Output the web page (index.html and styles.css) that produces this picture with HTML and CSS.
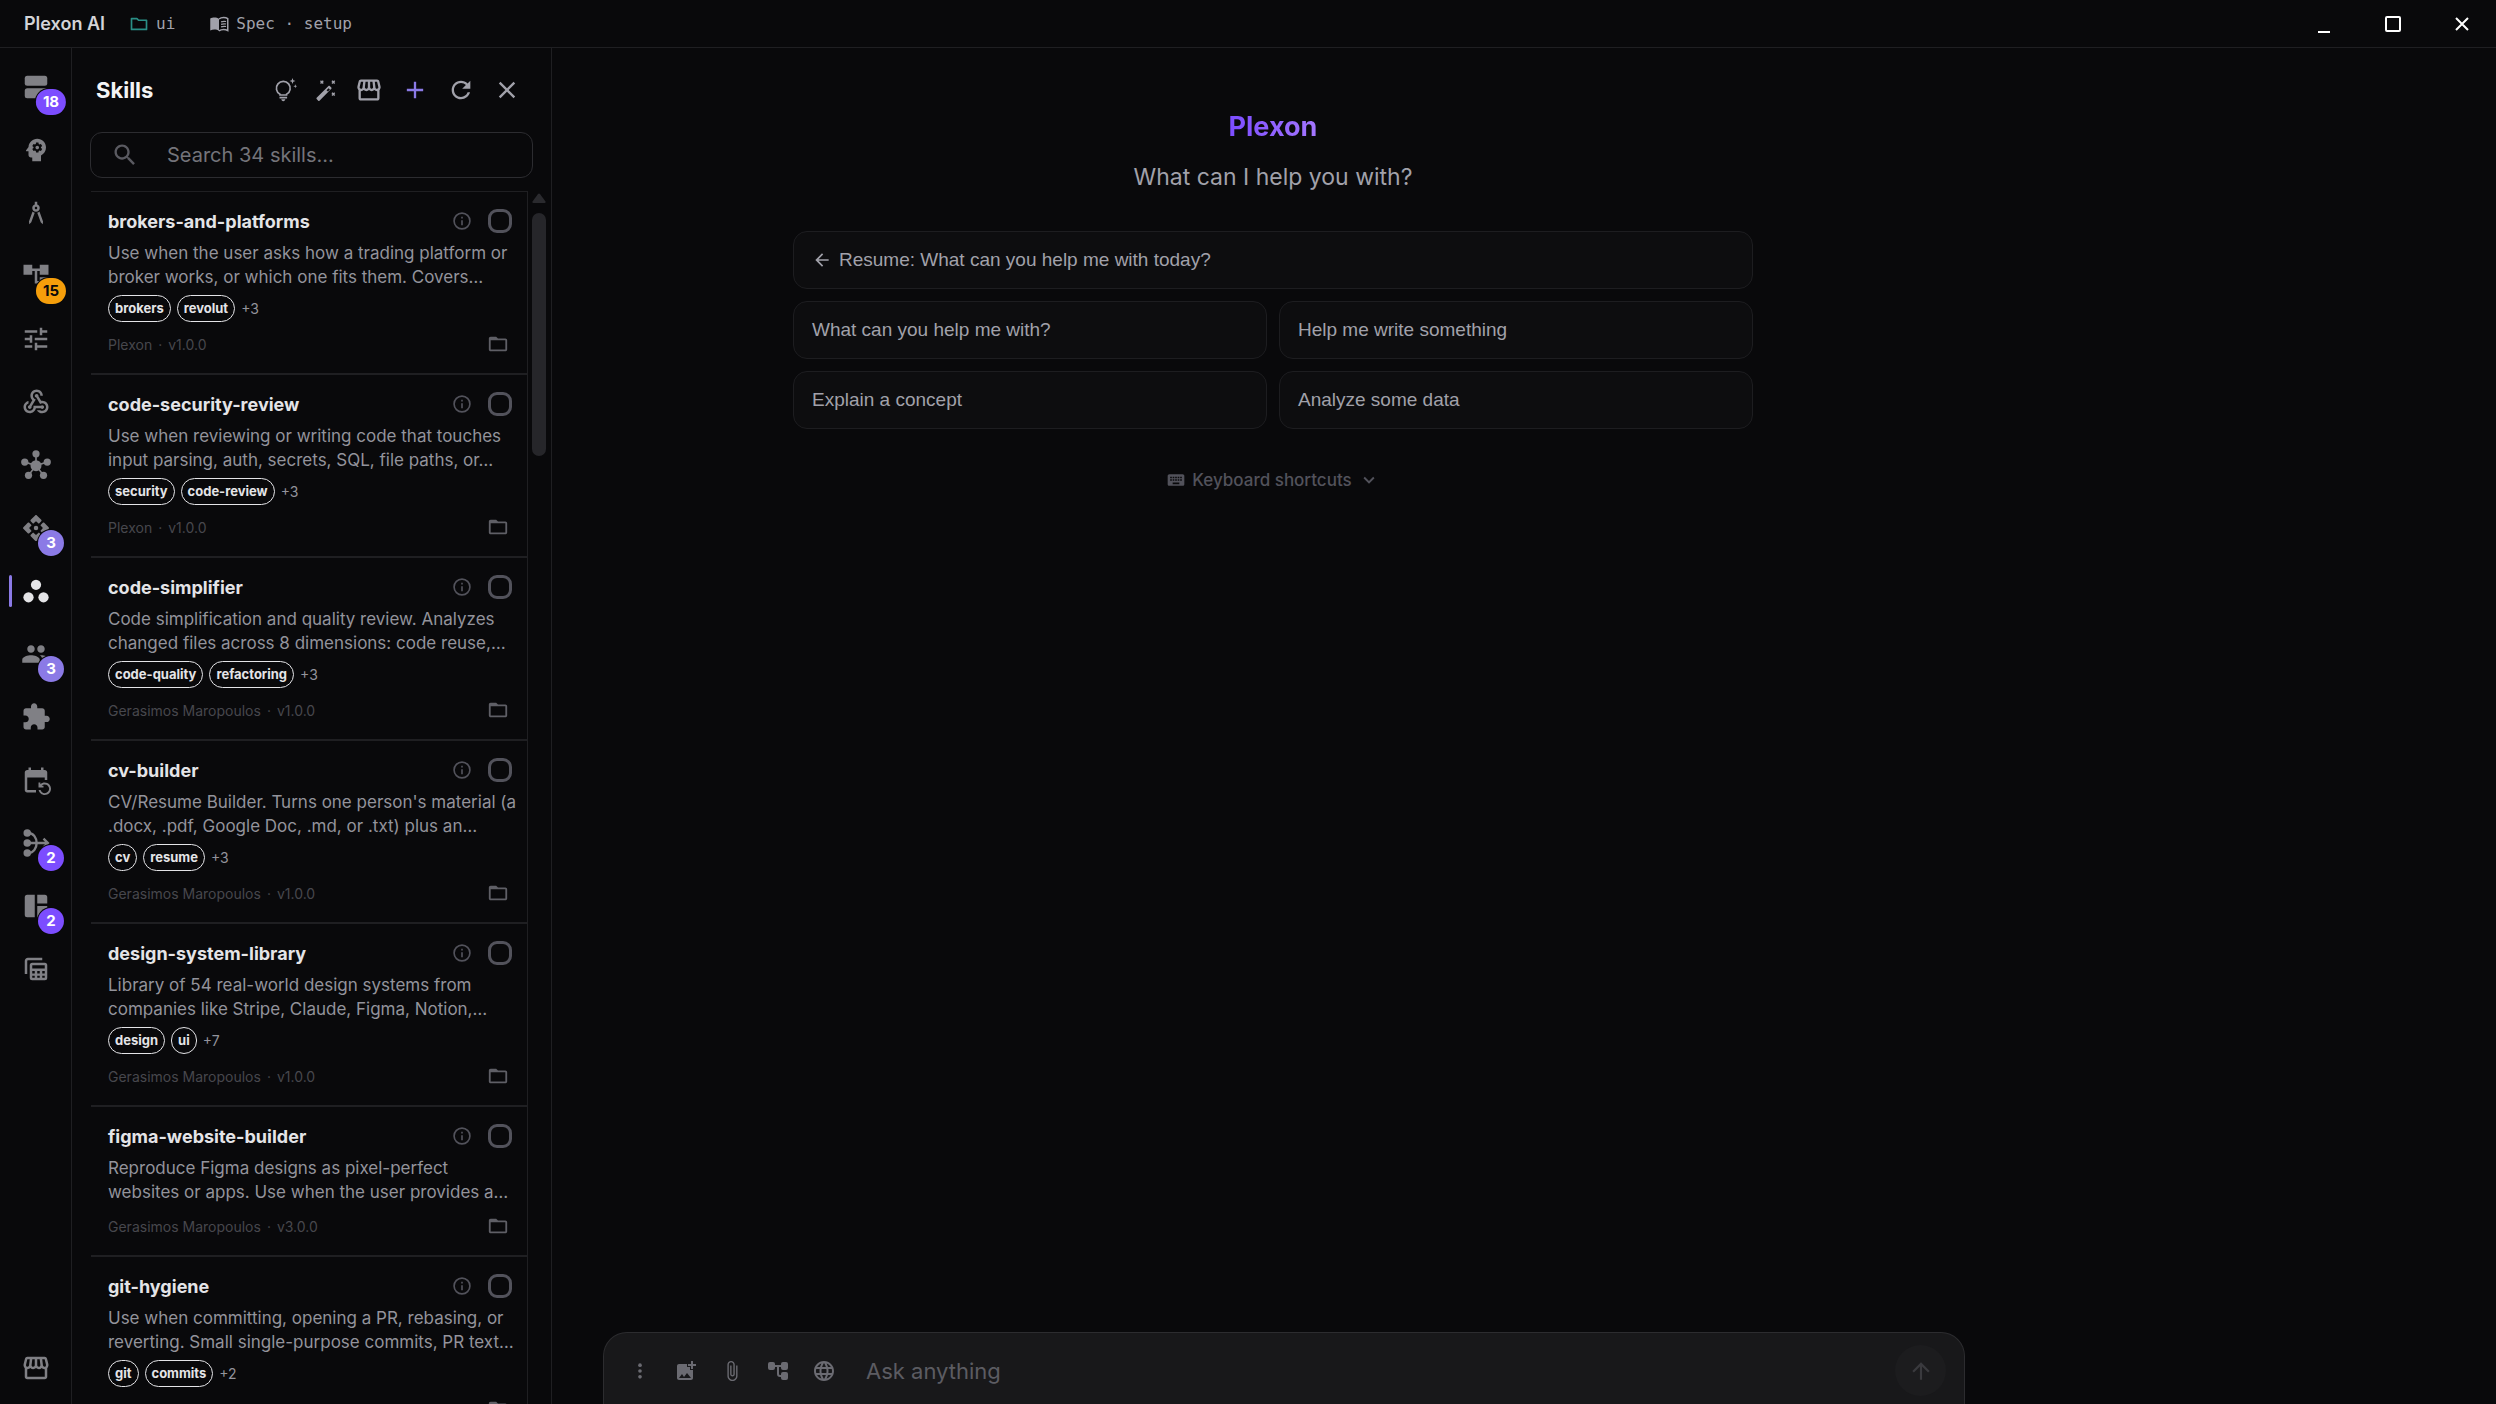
FILE: index.html
```html
<!DOCTYPE html>
<html lang="en">
<head>
<meta charset="utf-8">
<title>Plexon AI</title>
<link rel="stylesheet" href="styles.css">
</head>
<body>
<svg class="sprite" aria-hidden="true">
  <symbol id="agenda" viewBox="0 0 24 24"><rect x="3" y="3" width="18" height="8" rx="2"/><rect x="3" y="13" width="18" height="8" rx="2"/></symbol>
  <symbol id="mind" viewBox="0 0 24 24"><path d="M13 8.57c-.79 0-1.43.64-1.43 1.43s.64 1.43 1.43 1.43 1.43-.64 1.43-1.43-.64-1.43-1.43-1.43z"/><path d="M13 3C9.25 3 6.2 5.94 6.02 9.64L4.1 12.2c-.25.33-.01.8.4.8H6v3c0 1.1.9 2 2 2h1v3h7v-4.68c2.36-1.12 4-3.53 4-6.32 0-3.87-3.13-7-7-7zm3 7c0 .13-.01.26-.02.39l.83.66c.08.06.1.16.05.25l-.8 1.39c-.05.09-.16.12-.24.09l-.99-.4c-.21.16-.43.29-.67.39L14 13.83c-.01.1-.1.17-.2.17h-1.6c-.1 0-.18-.07-.2-.17l-.15-1.06c-.25-.1-.47-.23-.68-.39l-.99.4c-.09.03-.2 0-.25-.09l-.8-1.39c-.05-.08-.03-.19.05-.25l.84-.66c-.01-.13-.02-.26-.02-.39s.02-.27.04-.39l-.85-.66c-.08-.06-.1-.16-.05-.26l.8-1.38c.05-.09.15-.12.24-.09l1 .4c.2-.15.43-.29.67-.39l.15-1.06C12.02 6.07 12.1 6 12.2 6h1.6c.1 0 .18.07.2.17l.15 1.06c.24.1.46.23.67.39l1-.4c.09-.03.2 0 .24.09l.8 1.38c.05.09.03.2-.05.26l-.85.66c.03.12.04.25.04.39z"/></symbol>
  <symbol id="compass" viewBox="0 0 24 24"><path d="M6.36 18.78L6.61 21l1.62-1.54 2.77-7.6c-.68-.17-1.28-.51-1.77-.98l-2.87 7.9zM14.77 10.88c-.49.47-1.1.81-1.77.98l2.77 7.6L17.39 21l.25-2.22-2.87-7.9zM15 8c0-1.3-.84-2.4-2-2.82V3h-2v2.18C9.84 5.6 9 6.7 9 8c0 1.66 1.34 3 3 3s3-1.34 3-3zm-3 1c-.55 0-1-.45-1-1s.45-1 1-1 1 .45 1 1-.45 1-1 1z"/></symbol>
  <symbol id="tree" viewBox="0 0 24 24"><path d="M22 11V3h-7v3H9V3H2v8h7V8h2v10h4v3h7v-8h-7v3h-2V8h2v3z"/></symbol>
  <symbol id="tree-round" viewBox="0 0 24 24"><path d="M17 3h3a2 2 0 0 1 2 2v4a2 2 0 0 1-2 2h-3a2 2 0 0 1-2-2V8h-2v7a1 1 0 0 0 1 1h1v-1a2 2 0 0 1 2-2h3a2 2 0 0 1 2 2v4a2 2 0 0 1-2 2h-3a2 2 0 0 1-2-2v-1h-1a3 3 0 0 1-3-3V8H9v1a2 2 0 0 1-2 2H4a2 2 0 0 1-2-2V5a2 2 0 0 1 2-2h3a2 2 0 0 1 2 2v1h6V5a2 2 0 0 1 2-2z"/></symbol>
  <symbol id="tune" viewBox="0 0 24 24"><path d="M3 17v2h6v-2H3zM3 5v2h10V5H3zm10 16v-2h8v-2h-8v-2h-2v6h2zM7 9v2H3v2h4v2h2V9H7zm14 4v-2H11v2h10zm-6-4h2V7h4V5h-4V3h-2v6z"/></symbol>
  <symbol id="webhook" viewBox="0 0 24 24"><path d="M10 15h5.88c.27-.31.67-.5 1.12-.5.83 0 1.5.67 1.5 1.5s-.67 1.5-1.5 1.5c-.44 0-.84-.19-1.12-.5H11.9c-.46 2.28-2.48 4-4.9 4-2.76 0-5-2.24-5-5 0-2.42 1.72-4.44 4-4.9v2.07C4.84 13.58 4 14.7 4 16c0 1.65 1.35 3 3 3s3-1.35 3-3v-1zm2.5-11c1.65 0 3 1.35 3 3h2c0-2.76-2.24-5-5-5s-5 2.24-5 5c0 1.43.6 2.71 1.55 3.62l-2.35 3.9c-.68.14-1.2.75-1.2 1.48 0 .83.67 1.5 1.5 1.5s1.5-.67 1.5-1.5c0-.16-.02-.31-.07-.45l3.38-5.63C10.49 9.61 9.5 8.42 9.5 7c0-1.65 1.35-3 3-3zm4.5 9c-.64 0-1.23.2-1.72.54l-3.05-5.07C11.53 8.35 11 7.74 11 7c0-.83.67-1.5 1.5-1.5S14 6.17 14 7c0 .15-.02.29-.06.43l2.19 3.65c.28-.05.57-.08.87-.08 2.76 0 5 2.24 5 5s-2.24 5-5 5c-1.85 0-3.47-1.01-4.33-2.5h2.67c.48.32 1.05.5 1.66.5 1.65 0 3-1.35 3-3s-1.35-3-3-3z"/></symbol>
  <symbol id="hub" viewBox="0 0 24 24"><circle cx="12" cy="12.5" r="4.4"/><circle cx="12" cy="3" r="2.9"/><circle cx="3" cy="9.6" r="2.9"/><circle cx="21" cy="9.6" r="2.9"/><circle cx="6" cy="20.2" r="2.9"/><circle cx="18" cy="20.2" r="2.9"/><path d="M12 12.5V3M12 12.5L3 9.6M12 12.5l9-2.9M12 12.5l-6 7.7M12 12.5l6 7.7" fill="none" stroke="currentColor" stroke-width="1.3"/></symbol>
  <symbol id="api" viewBox="0 0 24 24"><circle cx="12" cy="12" r="1.8"/><path d="M12 6.500l2.300 2 1.900-1.900c.4-.4.4-.8 0-1.200L12.700 1.900c-.4-.4-1-.4-1.400 0L7.800 5.400c-.4.4-.4.800 0 1.200l1.900 1.900zM6.500 12l2-2.300-1.900-1.900c-.4-.4-.8-.4-1.200 0l-3.500 3.500c-.4.4-.4 1 0 1.400l3.500 3.500c.4.4.8.4 1.200 0l1.900-1.900zM17.500 12l-2-2.300 1.900-1.900c.4-.4.8-.4 1.200 0l3.500 3.500c.4.4.4 1 0 1.400l-3.500 3.500c-.4.4-.8.4-1.200 0l-1.900-1.900zM12 17.500l2.300-2 1.900 1.900c.4.4.4.8 0 1.200l-3.500 3.500c-.4.4-1 .4-1.400 0l-3.500-3.500c-.4-.4-.4-.8 0-1.200l1.900-1.900z"/></symbol>
  <symbol id="workspaces" viewBox="0 0 24 24"><circle cx="12" cy="7" r="4.100"/><circle cx="6" cy="17" r="4.100"/><circle cx="18" cy="17" r="4.100"/></symbol>
  <symbol id="people" viewBox="0 0 24 24"><path d="M16 11c1.660 0 2.990-1.340 2.990-3S17.660 5 16 5c-1.660 0-3 1.340-3 3s1.340 3 3 3zm-8 0c1.660 0 2.990-1.340 2.990-3S9.660 5 8 5C6.340 5 5 6.340 5 8s1.340 3 3 3zm0 2c-2.330 0-7 1.170-7 3.500V19h14v-2.500c0-2.330-4.670-3.500-7-3.500zm8 0c-.29 0-.62.02-.97.05 1.160.84 1.970 1.970 1.970 3.450V19h6v-2.500c0-2.330-4.670-3.500-7-3.500z"/></symbol>
  <symbol id="puzzle" viewBox="0 0 24 24"><path d="M20.5 11H19V7c0-1.100-.9-2-2-2h-4V3.500C13 2.120 11.880 1 10.500 1S8 2.120 8 3.500V5H4c-1.100 0-1.990.9-1.990 2v3.800H3.500c1.490 0 2.700 1.210 2.700 2.700s-1.210 2.700-2.700 2.700H2V20c0 1.100.9 2 2 2h3.800v-1.500c0-1.490 1.210-2.700 2.700-2.700 1.490 0 2.700 1.210 2.700 2.700V22H17c1.100 0 2-.9 2-2v-4h1.500c1.380 0 2.500-1.120 2.500-2.500S21.880 11 20.500 11z"/></symbol>
  <symbol id="event" viewBox="0 0 24 24"><path d="M21 12V6c0-1.100-.9-2-2-2h-1V2h-2v2H8V2H6v2H5c-1.110 0-1.990.9-1.990 2L3 20c0 1.100.89 2 2 2h7v-2H5V10h14v2h2zm-5.360 8c.43 1.450 1.770 2.500 3.360 2.500 1.930 0 3.500-1.570 3.500-3.500s-1.570-3.500-3.500-3.500c-.95 0-1.820.38-2.450 1H18V18h-4v-4h1.500v1.430c.9-.88 2.140-1.430 3.500-1.430 2.760 0 5 2.240 5 5s-2.240 5-5 5c-2.420 0-4.440-1.720-4.900-4h1.540z"/></symbol>
  <symbol id="merge" viewBox="0 0 24 24"><circle cx="5" cy="4" r="3"/><circle cx="5" cy="12" r="3"/><circle cx="5" cy="20" r="3"/><path d="M5 12h16M18 8.500l3.500 3.500-3.500 3.500M6 4c4 0 6.500 4 6.500 8S10 20 6 20" fill="none" stroke="currentColor" stroke-width="1.900"/></symbol>
  <symbol id="dash" viewBox="0 0 24 24"><path d="M11 21H5a2 2 0 0 1-2-2V5a2 2 0 0 1 2-2h6zM13 21h6a2 2 0 0 0 2-2v-7h-8zM21 10V5a2 2 0 0 0-2-2h-6v7z"/></symbol>
  <symbol id="tables" viewBox="0 0 24 24"><path d="M4 16V5.500A1.500 1.500 0 0 1 5.500 4H17" fill="none" stroke="currentColor" stroke-width="2"/><path fill-rule="evenodd" d="M9 7h10a2 2 0 0 1 2 2v10a2 2 0 0 1-2 2H9a2 2 0 0 1-2-2V9a2 2 0 0 1 2-2zm0 2v2.500h10V9zm0 4.500V15.500h2v-2zm4 0v2h2v-2zm4 0v2h2v-2zM9 17.300V19h2v-1.700zm4 0V19h2v-1.700zm4 0V19h2v-1.700z"/></symbol>
  <symbol id="store" viewBox="0 0 24 24"><path d="M21.900 8.890l-1.050-4.370c-.22-.9-1-1.520-1.910-1.520H5.050c-.9 0-1.690.63-1.900 1.520L2.100 8.890c-.24 1.020-.02 2.060.62 2.880.08.11.19.19.28.29V19c0 1.100.9 2 2 2h14c1.100 0 2-.9 2-2v-6.940c.09-.09.2-.18.28-.28.64-.82.87-1.870.62-2.890zm-2.990-3.900l1.050 4.370c.1.42.01.84-.25 1.170-.14.18-.44.47-.94.47-.61 0-1.140-.49-1.210-1.140L16.980 5l1.930-.01zM13 5h1.960l.54 4.520c.05.39-.07.78-.33 1.070-.22.26-.54.41-.95.41-.67 0-1.220-.59-1.220-1.310V5zM8.490 9.520L9.040 5H11v4.690c0 .72-.55 1.310-1.290 1.310-.34 0-.65-.15-.89-.41-.25-.29-.37-.68-.33-1.070zm-4.450-.16L5.050 5h1.970l-.58 4.860c-.08.65-.6 1.140-1.210 1.140-.49 0-.8-.29-.93-.47-.27-.32-.36-.75-.26-1.170zM5 19v-6.030c.08.01.15.03.23.03.87 0 1.660-.36 2.240-.95.6.6 1.400.95 2.310.95.87 0 1.650-.36 2.230-.93.59.57 1.390.93 2.290.93.84 0 1.640-.35 2.240-.95.58.59 1.370.95 2.240.95.08 0 .15-.02.23-.03V19H5z"/></symbol>
  <symbol id="folder" viewBox="0 0 24 24"><path d="M20 6h-8l-2-2H4c-1.100 0-1.990.9-1.990 2L2 18c0 1.100.9 2 2 2h16c1.100 0 2-.9 2-2V8c0-1.100-.9-2-2-2zm0 12H4V8h16v10z"/></symbol>
  <symbol id="folder-tab" viewBox="0 0 24 24"><path d="M3 18.500v-13h6.500l2 2H21v11z" fill="none" stroke="currentColor" stroke-width="2" stroke-linejoin="round"/></symbol>
  <symbol id="book" viewBox="0 0 24 24"><path d="M12 6C10.500 4.800 8.500 4.300 6.500 4.300c-1.700 0-3.600.3-5 1.200v14.300c1.500-.8 3.200-1.200 5-1.200 2 0 4 .5 5.500 1.700z"/><path d="M12 6c1.500-1.200 3.500-1.700 5.500-1.700 1.700 0 3.600.3 5 1.200v14.300c-1.500-.8-3.200-1.200-5-1.200-2 0-4 .5-5.500 1.700" fill="none" stroke="currentColor" stroke-width="1.800"/><path d="M14.500 9.500c2-.9 4-1 6-.5M14.500 12.500c2-.9 4-1 6-.5M14.500 15.500c2-.9 4-1 6-.5" fill="none" stroke="currentColor" stroke-width="1.500"/></symbol>
  <symbol id="bulb" viewBox="0 0 24 24"><path d="M7 16.300A6.900 6.900 0 1 1 13.600 16.300V17H7z" fill="none" stroke="currentColor" stroke-width="1.700"/><path d="M6.500 18.800h7.600v1.600H6.500zM8.300 21.300h4c0 1.100-.9 1.900-2 1.900s-2-.8-2-1.900zM19.500 0l.8 2.200 2.200.8-2.200.8-.8 2.200-.8-2.200-2.200-.8 2.200-.8zM22.300 6.200l.5 1.500 1.500.5-1.500.5-.5 1.500-.5-1.500-1.500-.5 1.500-.5z"/></symbol>
  <symbol id="wand" viewBox="0 0 24 24"><path fill-rule="evenodd" d="M1.800 20.500L14.700 7.600c.4-.4 1-.4 1.400 0l1.700 1.700c.4.4.4 1 0 1.400L4.900 23.600c-.4.4-1 .4-1.400 0l-1.700-1.700c-.4-.4-.4-1 0-1.400zM12.600 12.200l1.500 1.500 2.200-2.200-1.500-1.500z"/><path d="M6 2l3 3m0-3L6 5M18.500 2l3 3m0-3l-3 3M18.500 15l3 3m0-3l-3 3" fill="none" stroke="currentColor" stroke-width="1.500"/></symbol>
  <symbol id="add" viewBox="0 0 24 24"><path d="M19 13h-6v6h-2v-6H5v-2h6V5h2v6h6z"/></symbol>
  <symbol id="refresh" viewBox="0 0 24 24"><path d="M17.650 6.350C16.200 4.900 14.210 4 12 4c-4.420 0-7.990 3.580-7.990 8s3.570 8 7.990 8c3.730 0 6.840-2.550 7.730-6h-2.080c-.82 2.330-3.040 4-5.650 4-3.310 0-6-2.690-6-6s2.690-6 6-6c1.660 0 3.140.69 4.220 1.780L13 11h7V4l-2.350 2.350z"/></symbol>
  <symbol id="close" viewBox="0 0 24 24"><path d="M19 6.410L17.590 5 12 10.590 6.410 5 5 6.410 10.590 12 5 17.590 6.410 19 12 13.410 17.590 19 19 17.590 13.410 12z"/></symbol>
  <symbol id="search" viewBox="0 0 24 24"><path d="M15.500 14h-.79l-.28-.27C15.410 12.590 16 11.110 16 9.500 16 5.910 13.090 3 9.500 3S3 5.910 3 9.500 5.910 16 9.500 16c1.610 0 3.090-.59 4.230-1.570l.27.28v.79l5 4.990L20.490 19l-4.990-5zm-6 0C7.010 14 5 11.990 5 9.500S7.010 5 9.500 5 14 7.010 14 9.500 11.990 14 9.500 14z"/></symbol>
  <symbol id="info" viewBox="0 0 24 24"><circle cx="12" cy="12" r="9.500" fill="none" stroke="currentColor" stroke-width="2"/><path d="M11 7h2v2h-2zM11 11h2v6h-2z"/></symbol>
  <symbol id="back" viewBox="0 0 24 24"><path d="M20 11H7.830l5.590-5.590L12 4l-8 8 8 8 1.410-1.410L7.830 13H20v-2z"/></symbol>
  <symbol id="up" viewBox="0 0 24 24"><path d="M4 12l1.410 1.410L11 7.830V20h2V7.830l5.580 5.590L20 12l-8-8-8 8z"/></symbol>
  <symbol id="down" viewBox="0 0 24 24"><path d="M7.410 8.590L12 13.170l4.590-4.580L18 10l-6 6-6-6 1.410-1.410z"/></symbol>
  <symbol id="keyboard" viewBox="0 0 24 24"><path d="M20 5H4c-1.100 0-1.990.9-1.990 2L2 17c0 1.100.9 2 2 2h16c1.100 0 2-.9 2-2V7c0-1.100-.9-2-2-2zm-9 3h2v2h-2V8zm0 3h2v2h-2v-2zM8 8h2v2H8V8zm0 3h2v2H8v-2zm-1 2H5v-2h2v2zm0-3H5V8h2v2zm9 7H8v-2h8v2zm0-4h-2v-2h2v2zm0-3h-2V8h2v2zm3 3h-2v-2h2v2zm0-3h-2V8h2v2z"/></symbol>
  <symbol id="more" viewBox="0 0 24 24"><circle cx="12" cy="5" r="2.200"/><circle cx="12" cy="12" r="2.200"/><circle cx="12" cy="19" r="2.200"/></symbol>
  <symbol id="photo" viewBox="0 0 24 24"><path d="M19 7v3h-2V7h-3V5h3V2h2v3h3v2h-3zm-3 4V8h-3V5H5c-1.100 0-2 .9-2 2v12c0 1.100.9 2 2 2h12c1.100 0 2-.9 2-2v-8h-3zM5 19l3-4 2 3 3-4 4 5H5z"/></symbol>
  <symbol id="clip" viewBox="0 0 24 24"><path d="M16.500 6v11.500c0 2.210-1.790 4-4 4s-4-1.790-4-4V5c0-1.380 1.120-2.500 2.500-2.500s2.500 1.120 2.500 2.500v10.500c0 .55-.45 1-1 1s-1-.45-1-1V6H10v9.500c0 1.380 1.120 2.500 2.500 2.500s2.500-1.120 2.500-2.500V5c0-2.210-1.790-4-4-4S7 2.790 7 5v12.500c0 3.040 2.460 5.500 5.500 5.500s5.500-2.460 5.500-5.500V6h-1.500z"/></symbol>
  <symbol id="globe" viewBox="0 0 24 24"><path d="M11.990 2C6.470 2 2 6.480 2 12s4.470 10 9.990 10C17.520 22 22 17.520 22 12S17.520 2 11.990 2zm6.930 6h-2.950c-.32-1.250-.78-2.450-1.380-3.560 1.840.63 3.370 1.910 4.330 3.560zM12 4.040c.83 1.200 1.480 2.530 1.910 3.960h-3.820c.43-1.430 1.080-2.760 1.910-3.960zM4.260 14C4.100 13.360 4 12.690 4 12s.1-1.360.26-2h3.380c-.08.66-.14 1.320-.14 2s.06 1.340.14 2H4.260zm.82 2h2.950c.32 1.250.78 2.450 1.380 3.560-1.840-.63-3.370-1.900-4.330-3.560zm2.950-8H5.080c.96-1.660 2.490-2.930 4.330-3.560C8.810 5.550 8.350 6.750 8.030 8zM12 19.960c-.83-1.200-1.480-2.530-1.910-3.960h3.820c-.43 1.430-1.080 2.760-1.910 3.960zM14.340 14H9.660c-.09-.66-.16-1.320-.16-2s.07-1.350.16-2h4.680c.09.65.16 1.320.16 2s-.07 1.340-.16 2zm.25 5.560c.6-1.110 1.060-2.310 1.380-3.560h2.950c-.96 1.650-2.490 2.930-4.330 3.560zM16.360 14c.08-.66.14-1.320.14-2s-.06-1.340-.14-2h3.380c.16.64.26 1.310.26 2s-.1 1.360-.26 2h-3.380z"/></symbol>
</svg>

<header class="titlebar">
  <span class="brand">Plexon AI</span>
  <span class="crumb crumb-folder"><svg class="icon i20 teal"><use href="#folder-tab"/></svg>ui</span>
  <span class="crumb"><svg class="icon i20"><use href="#book"/></svg>Spec · setup</span>
  <div class="window-controls">
    <button aria-label="Minimize"><svg width="16" height="18" viewBox="0 0 16 18"><path d="M2 17h12" stroke="currentColor" stroke-width="2"/></svg></button>
    <button aria-label="Maximize"><svg width="16" height="16" viewBox="0 0 16 16"><rect x="1" y="1" width="14" height="14" rx="1" fill="none" stroke="currentColor" stroke-width="2"/></svg></button>
    <button aria-label="Close"><svg width="14" height="14" viewBox="0 0 14 14"><path d="M1 1l12 12M13 1L1 13" stroke="currentColor" stroke-width="2"/></svg></button>
  </div>
</header>

<div class="shell">
  <nav class="rail" aria-label="Sections">
    <button class="rail-item" aria-label="Chats"><svg class="icon i30"><use href="#agenda"/></svg><span class="badge violet">18</span></button>
    <button class="rail-item" aria-label="Memory"><svg class="icon i30"><use href="#mind"/></svg></button>
    <button class="rail-item" aria-label="Design"><svg class="icon i30"><use href="#compass"/></svg></button>
    <button class="rail-item" aria-label="Projects"><svg class="icon i30"><use href="#tree"/></svg><span class="badge amber">15</span></button>
    <button class="rail-item" aria-label="Tuning"><svg class="icon i30"><use href="#tune"/></svg></button>
    <button class="rail-item" aria-label="Webhooks"><svg class="icon i30"><use href="#webhook"/></svg></button>
    <button class="rail-item" aria-label="Hub"><svg class="icon i30"><use href="#hub"/></svg></button>
    <button class="rail-item" aria-label="API"><svg class="icon i30"><use href="#api"/></svg><span class="badge soft">3</span></button>
    <button class="rail-item active" aria-label="Skills"><svg class="icon i30"><use href="#workspaces"/></svg></button>
    <button class="rail-item" aria-label="Agents"><svg class="icon i30"><use href="#people"/></svg><span class="badge soft">3</span></button>
    <button class="rail-item" aria-label="Plugins"><svg class="icon i30"><use href="#puzzle"/></svg></button>
    <button class="rail-item" aria-label="Schedule"><svg class="icon i30"><use href="#event"/></svg></button>
    <button class="rail-item" aria-label="Workflows"><svg class="icon i30"><use href="#merge"/></svg><span class="badge violet">2</span></button>
    <button class="rail-item" aria-label="Dashboards"><svg class="icon i30"><use href="#dash"/></svg><span class="badge violet">2</span></button>
    <button class="rail-item" aria-label="Tables"><svg class="icon i30"><use href="#tables"/></svg></button>
    <button class="rail-item last" aria-label="Marketplace"><svg class="icon i30"><use href="#store"/></svg></button>
  </nav>

  <aside class="panel">
    <div class="panel-head">
      <h1>Skills</h1>
      <button class="tool small" aria-label="Suggest"><svg class="icon i24"><use href="#bulb"/></svg></button>
      <button class="tool small" aria-label="Generate"><svg class="icon i22"><use href="#wand"/></svg></button>
      <button class="tool" aria-label="Marketplace"><svg class="icon i28"><use href="#store"/></svg></button>
      <button class="tool accent" aria-label="Add"><svg class="icon i28"><use href="#add"/></svg></button>
      <button class="tool" aria-label="Refresh"><svg class="icon i28"><use href="#refresh"/></svg></button>
      <button class="tool" aria-label="Close panel"><svg class="icon i28"><use href="#close"/></svg></button>
    </div>
    <label class="search"><svg class="icon i28"><use href="#search"/></svg><input type="text" aria-label="Search skills" placeholder="Search 34 skills..."></label>
    <div class="list-area">
      <ul class="skills">
        <li class="skill">
          <div class="skill-head"><h2>brokers-and-platforms</h2><button class="info" aria-label="Details"><svg class="icon i20"><use href="#info"/></svg></button><input type="checkbox" aria-label="Enable brokers-and-platforms"></div>
          <p>Use when the user asks how a trading platform or<br>broker works, or which one fits them. Covers…</p>
          <div class="tags"><span class="tag">brokers</span><span class="tag">revolut</span><span class="more">+3</span></div>
          <div class="skill-foot"><span>Plexon</span><span>·</span><span>v1.0.0</span><button aria-label="Open folder"><svg class="icon i22"><use href="#folder"/></svg></button></div>
        </li>
        <li class="skill">
          <div class="skill-head"><h2>code-security-review</h2><button class="info" aria-label="Details"><svg class="icon i20"><use href="#info"/></svg></button><input type="checkbox" aria-label="Enable code-security-review"></div>
          <p>Use when reviewing or writing code that touches<br>input parsing, auth, secrets, SQL, file paths, or…</p>
          <div class="tags"><span class="tag">security</span><span class="tag">code-review</span><span class="more">+3</span></div>
          <div class="skill-foot"><span>Plexon</span><span>·</span><span>v1.0.0</span><button aria-label="Open folder"><svg class="icon i22"><use href="#folder"/></svg></button></div>
        </li>
        <li class="skill">
          <div class="skill-head"><h2>code-simplifier</h2><button class="info" aria-label="Details"><svg class="icon i20"><use href="#info"/></svg></button><input type="checkbox" aria-label="Enable code-simplifier"></div>
          <p>Code simplification and quality review. Analyzes<br>changed files across 8 dimensions: code reuse,…</p>
          <div class="tags"><span class="tag">code-quality</span><span class="tag">refactoring</span><span class="more">+3</span></div>
          <div class="skill-foot"><span>Gerasimos Maropoulos</span><span>·</span><span>v1.0.0</span><button aria-label="Open folder"><svg class="icon i22"><use href="#folder"/></svg></button></div>
        </li>
        <li class="skill">
          <div class="skill-head"><h2>cv-builder</h2><button class="info" aria-label="Details"><svg class="icon i20"><use href="#info"/></svg></button><input type="checkbox" aria-label="Enable cv-builder"></div>
          <p>CV/Resume Builder. Turns one person's material (a<br>.docx, .pdf, Google Doc, .md, or .txt) plus an…</p>
          <div class="tags"><span class="tag">cv</span><span class="tag">resume</span><span class="more">+3</span></div>
          <div class="skill-foot"><span>Gerasimos Maropoulos</span><span>·</span><span>v1.0.0</span><button aria-label="Open folder"><svg class="icon i22"><use href="#folder"/></svg></button></div>
        </li>
        <li class="skill">
          <div class="skill-head"><h2>design-system-library</h2><button class="info" aria-label="Details"><svg class="icon i20"><use href="#info"/></svg></button><input type="checkbox" aria-label="Enable design-system-library"></div>
          <p>Library of 54 real-world design systems from<br>companies like Stripe, Claude, Figma, Notion,…</p>
          <div class="tags"><span class="tag">design</span><span class="tag">ui</span><span class="more">+7</span></div>
          <div class="skill-foot"><span>Gerasimos Maropoulos</span><span>·</span><span>v1.0.0</span><button aria-label="Open folder"><svg class="icon i22"><use href="#folder"/></svg></button></div>
        </li>
        <li class="skill">
          <div class="skill-head"><h2>figma-website-builder</h2><button class="info" aria-label="Details"><svg class="icon i20"><use href="#info"/></svg></button><input type="checkbox" aria-label="Enable figma-website-builder"></div>
          <p>Reproduce Figma designs as pixel-perfect<br>websites or apps. Use when the user provides a…</p>
          <div class="skill-foot"><span>Gerasimos Maropoulos</span><span>·</span><span>v3.0.0</span><button aria-label="Open folder"><svg class="icon i22"><use href="#folder"/></svg></button></div>
        </li>
        <li class="skill">
          <div class="skill-head"><h2>git-hygiene</h2><button class="info" aria-label="Details"><svg class="icon i20"><use href="#info"/></svg></button><input type="checkbox" aria-label="Enable git-hygiene"></div>
          <p>Use when committing, opening a PR, rebasing, or<br>reverting. Small single-purpose commits, PR text…</p>
          <div class="tags"><span class="tag">git</span><span class="tag">commits</span><span class="more">+2</span></div>
          <div class="skill-foot"><span>Plexon</span><span>·</span><span>v1.0.0</span><button aria-label="Open folder"><svg class="icon i22"><use href="#folder"/></svg></button></div>
        </li>
      </ul>
      <div class="scrollbar" aria-hidden="true"><svg width="14" height="10" viewBox="0 0 14 10"><path d="M6 1a1.400 1.400 0 0 1 2 0l5.500 7.500c.4.7 0 1.500-.8 1.500H1.300c-.8 0-1.200-.8-.8-1.500z"/></svg><div class="thumb"></div></div>
    </div>
  </aside>

  <main class="chat">
    <div class="welcome">
      <div class="logo">Plexon</div>
      <p class="lead">What can I help you with?</p>
      <div class="cards">
        <button class="card wide"><svg class="icon i20"><use href="#back"/></svg>Resume: What can you help me with today?</button>
        <button class="card">What can you help me with?</button>
        <button class="card">Help me write something</button>
        <button class="card">Explain a concept</button>
        <button class="card">Analyze some data</button>
      </div>
      <button class="shortcuts"><svg class="icon i20"><use href="#keyboard"/></svg>Keyboard shortcuts<svg class="icon i22"><use href="#down"/></svg></button>
    </div>
    <form class="composer">
      <button type="button" class="tool" aria-label="More"><svg class="icon i20"><use href="#more"/></svg></button>
      <button type="button" class="tool" aria-label="Add image"><svg class="icon i24"><use href="#photo"/></svg></button>
      <button type="button" class="tool" aria-label="Attach file"><svg class="icon i22"><use href="#clip"/></svg></button>
      <button type="button" class="tool" aria-label="Workflow"><svg class="icon i24"><use href="#tree-round"/></svg></button>
      <button type="button" class="tool" aria-label="Web"><svg class="icon i24"><use href="#globe"/></svg></button>
      <input type="text" aria-label="Message" placeholder="Ask anything">
      <button type="submit" class="send" aria-label="Send"><svg class="icon i26"><use href="#up"/></svg></button>
    </form>
  </main>
</div>
</body>
</html>
```
FILE: styles.css
```css
* { box-sizing: border-box; }
body {
  margin: 0;
  height: 100vh;
  display: flex;
  flex-direction: column;
  overflow: hidden;
  background: #09090b;
  color: #e4e4e7;
  font-family: Inter, "Noto Sans", sans-serif;
}
button { padding: 0; border: 0; background: none; color: inherit; font: inherit; cursor: pointer; }
h1, h2, p, ul { margin: 0; padding: 0; }
input { font: inherit; color: inherit; }
.sprite { display: none; }
.icon { display: block; flex: none; fill: currentColor; }
.i20 { width: 20px; height: 20px; }
.i22 { width: 22px; height: 22px; }
.i24 { width: 24px; height: 24px; }
.i26 { width: 26px; height: 26px; }
.i28 { width: 28px; height: 28px; }
.i30 { width: 30px; height: 30px; }

.titlebar {
  flex: none;
  display: flex;
  align-items: center;
  height: 48px;
  padding-left: 24px;
  border-bottom: 1px solid #1f1f22;
}
.brand { margin-right: 24px; font-size: 18px; font-weight: 600; color: #d4d4d8; }
.crumb { display: flex; align-items: center; gap: 7px; font-family: "DejaVu Sans Mono", monospace; font-size: 16px; color: #a1a1aa; }
.crumb-folder { margin-right: 34px; }
.teal { color: #2a8f86; }
.window-controls { display: flex; align-self: stretch; margin-left: auto; color: #fff; }
.window-controls button { display: flex; align-items: center; justify-content: center; width: 69px; }

.shell { flex: 1; display: flex; min-height: 0; }
.rail {
  flex: none;
  display: flex;
  flex-direction: column;
  width: 72px;
  padding: 7px 0 5px;
  border-right: 1px solid #1f1f22;
}
.rail-item { position: relative; flex: none; display: flex; align-items: center; justify-content: center; height: 63px; color: #808085; }
.rail-item.active { color: #e4e4e7; }
.rail-item.active::before { content: ""; position: absolute; left: 9px; top: 16px; width: 3px; height: 32px; border-radius: 2px; background: #8b7ae6; }
.rail-item.last { margin-top: auto; }
.badge {
  position: absolute;
  left: 51px;
  top: 47px;
  transform: translate(-50%, -50%);
  min-width: 26px;
  height: 26px;
  padding: 0 7px;
  border-radius: 13px;
  box-shadow: 0 0 0 1px #09090b;
  font-size: 15px;
  font-weight: 700;
  line-height: 26px;
  color: #fff;
}
.violet { background: #7c4dff; }
.amber { background: #f59e0b; color: #09090b; }
.soft { background: #8b7ae6; }

.panel { flex: none; display: flex; flex-direction: column; width: 480px; border-right: 1px solid #1f1f22; }
.panel-head { flex: none; display: flex; align-items: center; height: 84px; padding: 0 21px 0 24px; color: #a1a1aa; }
.panel-head h1 { flex: 1; font-size: 22px; font-weight: 700; color: #f4f4f5; }
.tool { display: flex; align-items: center; justify-content: center; width: 46px; height: 46px; }
.tool.small { width: 41px; }
.accent { color: #8b7ae6; }
.search {
  flex: none;
  display: flex;
  align-items: center;
  gap: 28px;
  height: 46px;
  margin: 0 18px;
  padding: 0 20px;
  border: 1px solid #2c2c30;
  border-radius: 12px;
  color: #5a5a61;
}
.search input { flex: 1; min-width: 0; padding: 0; border: 0; outline: 0; background: none; font-size: 20px; }
.search input::placeholder { color: #74747a; opacity: 1; }
.list-area { flex: 1; display: flex; min-height: 0; margin: 13px 1px 0 19px; }
.skills { flex: 1; list-style: none; overflow: hidden; }
.skill { padding: 17px 15px 17px 17px; border: 1px solid #1f1f22; border-left: 0; }
.skill-head { display: flex; align-items: center; height: 24px; }
.skill-head h2 { flex: 1; font-size: 18px; font-weight: 700; }
.info { margin-right: 16px; color: #52525b; }
.skill-head input { appearance: none; width: 24px; height: 24px; margin: 0; border: 3px solid #52525b; border-radius: 9px; }
.skill p { margin-top: 8px; font-size: 17px; line-height: 24px; white-space: nowrap; color: #93939b; }
.tags { display: flex; align-items: center; gap: 6px; margin-top: 6px; }
.tag { height: 27px; padding: 0 6px; border: 1px solid #e4e4e7; border-radius: 14px; font-size: 13px; font-weight: 700; line-height: 25px; }
.more { font-size: 14px; color: #93939b; }
.skill-foot { display: flex; align-items: center; gap: 6px; height: 24px; margin-top: 10px; font-size: 14px; color: #47474d; }
.skill-foot button { margin-left: auto; margin-right: 3px; color: #5f5f66; }
.scrollbar { flex: none; display: flex; flex-direction: column; align-items: center; width: 22px; padding-top: 2px; fill: #2a2a2e; }
.thumb { width: 14px; height: 243px; margin-top: 10px; border-radius: 7px; background: #26262a; }

.chat { flex: 1; display: flex; flex-direction: column; justify-content: space-between; min-width: 0; padding-right: 480px; }
.welcome { display: flex; flex-direction: column; align-items: center; padding: 60px 22px 0 0; }
.logo { font-size: 27px; font-weight: 700; line-height: 38px; background: linear-gradient(90deg, #7c4dff, #a476ff); background-clip: text; color: transparent; }
.lead { margin-top: 17px; font-size: 23px; line-height: 28px; color: #a1a1aa; }
.cards { display: grid; grid-template-columns: 1fr 1fr; gap: 12px; width: 100%; max-width: 960px; margin-top: 40px; }
.card { display: flex; align-items: center; gap: 7px; height: 58px; padding: 0 18px; border: 1px solid #1d1d20; border-radius: 14px; background: #0d0d0f; font-family: "Liberation Sans", Arial, sans-serif; font-size: 19px; color: #a1a1aa; }
.wide { grid-column: 1 / -1; }
.shortcuts { display: flex; align-items: center; gap: 6px; margin-top: 39px; font-size: 17px; font-weight: 500; line-height: 24px; color: #52525b; }
.composer {
  display: flex;
  align-items: center;
  height: 72px;
  margin: 0 51px;
  padding: 4px 18px 0 13px;
  border: 1px solid #2c2c2f;
  border-bottom: 0;
  border-radius: 24px 24px 0 0;
  background: #18181a;
  color: #6b6b72;
}
.composer input { flex: 1; min-width: 0; margin-left: 19px; padding: 0; border: 0; outline: 0; background: none; font-size: 22px; }
.composer input::placeholder { color: #5c5c62; opacity: 1; }
.send { display: flex; align-items: center; justify-content: center; width: 51px; height: 51px; border-radius: 50%; background: #1c1c1e; color: #3a3a3e; }
```
